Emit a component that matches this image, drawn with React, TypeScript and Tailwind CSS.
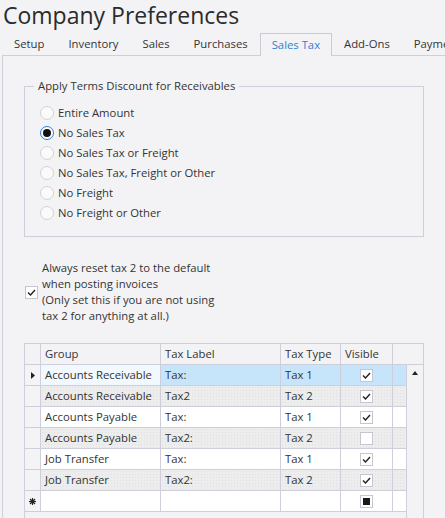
import React from 'react'

const rows = [
  { group: 'Accounts Receivable', label: 'Tax:', type: 'Tax 1', visible: true },
  { group: 'Accounts Receivable', label: 'Tax2', type: 'Tax 2', visible: true },
  { group: 'Accounts Payable', label: 'Tax:', type: 'Tax 1', visible: true },
  { group: 'Accounts Payable', label: 'Tax2:', type: 'Tax 2', visible: false },
  { group: 'Job Transfer', label: 'Tax:', type: 'Tax 1', visible: true },
  { group: 'Job Transfer', label: 'Tax2:', type: 'Tax 2', visible: true },
]

const tabs = ['Setup', 'Inventory', 'Sales', 'Purchases', 'Sales Tax', 'Add-Ons', 'Payments']

const options = [
  'Entire Amount',
  'No Sales Tax',
  'No Sales Tax or Freight',
  'No Sales Tax, Freight or Other',
  'No Freight',
  'No Freight or Other',
]

function Check() {
  return (
    <svg width="9" height="7" viewBox="0 0 9 7">
      <polyline points="1,3.5 3.5,6 8,1" fill="none" stroke="#222" strokeWidth="1.4" />
    </svg>
  )
}

function CheckBox({ state }: { state: 'on' | 'off' | 'mixed' }) {
  return (
    <div className="flex h-[13px] w-[13px] items-center justify-center border border-[#c6c6d2] bg-white">
      {state === 'on' && <Check />}
      {state === 'mixed' && <div className="h-[7px] w-[7px] bg-[#1a1a1a]" />}
    </div>
  )
}

function Radio({ checked }: { checked: boolean }) {
  return checked ? (
    <div className="flex h-[14px] w-[14px] items-center justify-center rounded-full border-[1.5px] border-[#2c7fd1] bg-white">
      <div className="h-[8px] w-[8px] rounded-full bg-[#111]" />
    </div>
  ) : (
    <div className="h-[14px] w-[14px] rounded-full border border-[#d2d2da] bg-[#fafafb]" />
  )
}

function NewRowMark() {
  return (
    <svg width="7" height="7" viewBox="0 0 7 7">
      <g stroke="#222" strokeWidth="1.1">
        <line x1="3.5" y1="0" x2="3.5" y2="7" />
        <line x1="0" y1="3.5" x2="7" y2="3.5" />
        <line x1="1" y1="1" x2="6" y2="6" />
        <line x1="6" y1="1" x2="1" y2="6" />
      </g>
      <circle cx="3.5" cy="3.5" r="2" fill="#222" />
    </svg>
  )
}

export default function App() {
  return (
    <div className="flex h-[518px] w-[445px] flex-col overflow-hidden bg-[#f3f3f6] font-['Open_Sans','Noto_Sans',sans-serif] text-[11.3px] text-[#333]">
      <div className="h-[33px] shrink-0 whitespace-nowrap pl-[3px] text-[23px] leading-[30px] text-[#2b2b2b]">
        Company Preferences
      </div>

      <div className="ml-[2px] flex h-[22px] shrink-0 whitespace-nowrap">
        {tabs.map((t) =>
          t === 'Sales Tax' ? (
            <div
              key={t}
              className="relative -mb-px flex h-[23px] items-center border-x border-t border-[#cbcbd8] bg-[#f3f3f6] px-[11px] text-[#2a82d3]"
            >
              {t}
            </div>
          ) : (
            <div key={t} className="flex items-center px-3">
              {t}
            </div>
          )
        )}
      </div>

      <div className="ml-[2px] shrink-0 border-l border-t border-[#cfcfdc] pl-[21px] pt-[22px]">
        <fieldset className="w-[400px] border border-[#cfcfdc] pb-[13px] pl-[15px]">
          <legend className="-ml-[6px] px-[4px] leading-[16px]">Apply Terms Discount for Receivables</legend>
          <div className="flex flex-col pt-[9px]">
            {options.map((o, i) => (
              <div key={o} className="flex h-[20px] items-center gap-[4px]">
                <Radio checked={i === 1} />
                <span>{o}</span>
              </div>
            ))}
          </div>
        </fieldset>

        <div className="mt-[23px] flex items-center gap-[4px] pl-[1px]">
          <CheckBox state="on" />
          <div className="leading-[16px]">
            Always reset tax 2 to the default
            <br />
            when posting invoices
            <br />
            (Only set this if you are not using
            <br />
            tax 2 for anything at all.)
          </div>
        </div>

        <div className="mt-[19px] w-[400px] border-l border-t border-[#cfcfdc]">
          <div className="flex h-[21px]">
            <div className="w-[16px] border-b border-r border-[#cfcfdc]" />
            <div className="flex w-[120px] items-center border-b border-r border-[#cfcfdc] pl-[4px]">Group</div>
            <div className="flex w-[120px] items-center border-b border-r border-[#cfcfdc] pl-[4px]">Tax Label</div>
            <div className="flex w-[60px] items-center border-b border-r border-[#cfcfdc] pl-[4px]">Tax Type</div>
            <div className="flex w-[52px] items-center border-b border-r border-[#cfcfdc] pl-[4px]">Visible</div>
            <div className="w-[31px] border-b border-r border-[#cfcfdc]" />
          </div>
          <div className="flex">
            <div className="flex w-[383px] flex-col">
              {rows.map((r, i) => {
                const sel = i === 0
                const bg = sel
                  ? 'bg-[#c6e4fa]'
                  : i % 2 === 1
                    ? 'bg-[#ededee] bg-[radial-gradient(#e0e0e3_0.6px,transparent_0.8px)] bg-[length:3px_3px]'
                    : 'bg-white'
                return (
                  <div key={i} className="flex h-[21px]">
                    <div className="flex w-[16px] items-center justify-center border-b border-r border-[#cfcfdc] bg-[#f4f4f7]">
                      {sel && (
                        <svg width="4" height="7" viewBox="0 0 4 7">
                          <polygon points="0,0 4,3.5 0,7" fill="#222" />
                        </svg>
                      )}
                    </div>
                    <div
                      className={`flex w-[120px] items-center border-b border-r border-[#cfcfdc] pl-[4px] ${
                        sel ? 'bg-[#f1f8fe]' : bg
                      }`}
                    >
                      {r.group}
                    </div>
                    <div className={`flex w-[120px] items-center border-b border-r border-[#cfcfdc] pl-[4px] ${bg}`}>{r.label}</div>
                    <div className={`flex w-[60px] items-center border-b border-r border-[#cfcfdc] pl-[4px] ${bg}`}>{r.type}</div>
                    <div className={`flex w-[52px] items-center justify-center border-b border-r border-[#cfcfdc] ${bg}`}>
                      <CheckBox state={r.visible ? 'on' : 'off'} />
                    </div>
                    <div className={`w-[14px] border-b border-r border-[#cfcfdc] ${bg}`} />
                  </div>
                )
              })}
              <div className="flex h-[21px]">
                <div className="flex w-[16px] items-center justify-center border-b border-r border-[#cfcfdc] bg-[#f4f4f7]">
                  <NewRowMark />
                </div>
                <div className="w-[120px] border-b border-r border-[#cfcfdc] bg-white" />
                <div className="w-[120px] border-b border-r border-[#cfcfdc] bg-white" />
                <div className="w-[60px] border-b border-r border-[#cfcfdc] bg-white" />
                <div className="flex w-[52px] items-center justify-center border-b border-r border-[#cfcfdc] bg-white">
                  <CheckBox state="mixed" />
                </div>
                <div className="w-[14px] border-b border-r border-[#cfcfdc] bg-white" />
              </div>
              <div className="h-[20px] border-r border-[#cfcfdc]" />
            </div>
            <div className="flex w-[17px] flex-col items-center border-r border-[#cfcfdc] pt-[6px]">
              <svg width="6" height="4" viewBox="0 0 6 4">
                <polygon points="0,4 3,0 6,4" fill="#222" />
              </svg>
            </div>
          </div>
        </div>
      </div>
    </div>
  )
}
